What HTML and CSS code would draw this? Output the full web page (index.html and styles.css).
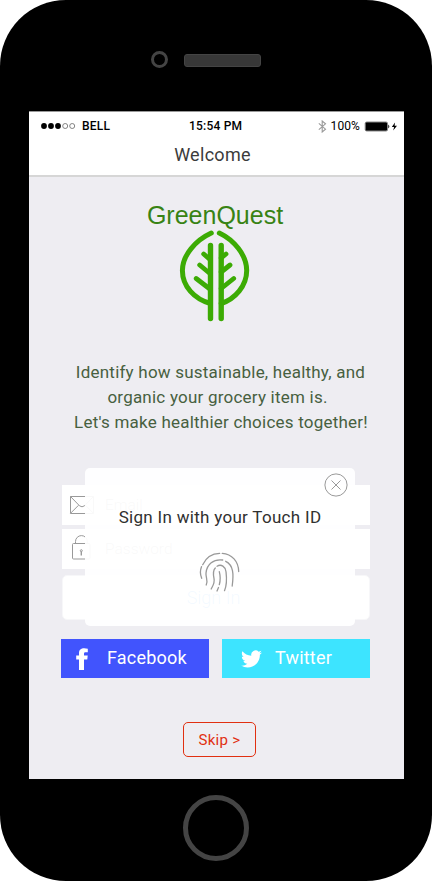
FILE: index.html
```html
<!DOCTYPE html>
<html lang="en">
<head>
<meta charset="utf-8">
<title>GreenQuest</title>
<link rel="stylesheet" href="styles.css">
</head>
<body>
<div class="phone">
  <div class="phone-top">
    <span class="camera"></span>
    <span class="speaker"></span>
  </div>
  <main class="screen">
    <header class="header">
      <div class="status">
        <div class="carrier">
          <svg class="signal" width="35" height="6" viewBox="0 0 35 6"><g fill="#000"><circle cx="3" cy="3" r="2.9"/><circle cx="10" cy="3" r="2.9"/><circle cx="17" cy="3" r="2.9"/></g><g fill="none" stroke="#666" stroke-width=".8"><circle cx="24.2" cy="3" r="2.5"/><circle cx="31.2" cy="3" r="2.5"/></g></svg>
          <span>BELL</span>
        </div>
        <span class="time">15:54 PM</span>
        <div class="power">
          <svg width="9" height="13" viewBox="0 0 9 13" fill="none" stroke="#999" stroke-width="1.1"><path d="M.8 3.3 7.5 9.2 4.2 12V1L7.5 3.8.8 9.7"/></svg>
          <span class="percent">100%</span>
          <svg width="34" height="11" viewBox="0 0 34 11"><rect x="1.200" y="1" width="22.300" height="9" rx="1.5" fill="#000" stroke="#888"/><path d="M24.300 3.500q2 2 0 4z" fill="#000"/><path d="M31 1.5 27.8 6h2.3L29.200 9.400 33 4.8h-2.400z" fill="#000"/></svg>
        </div>
      </div>
      <h1 class="title">Welcome</h1>
    </header>
    <section class="brand">
      <div class="brand-name">GreenQuest</div>
      <svg class="leaf" width="72" height="94" viewBox="0 0 72 94" fill="none" stroke="#3cab04" stroke-width="5" stroke-linecap="round"><path d="M32.300 4C17 11 3.400 26 3.400 41.500 3.400 57 15 70 31.500 74.500M40.300 4C55 11 67.700 26 67.700 41.500 67.700 57 56 70 42.200 74.500"/><path d="M31.500 16.500v73M42.200 16.500v73" stroke-width="5.400"/><path d="M24.700 25 31.500 31M20.700 36 31.500 45M17.200 49.500 31.500 60.500M47 25 42.200 29M51 36 42.200 43M54.700 49.500 42.200 59.500" stroke-width="4.800"/></svg>
    </section>
    <p class="intro"><span class="line one">Identify how sustainable, healthy, and</span><span class="line two">organic your grocery item is.</span><span class="line three">Let's make healthier choices together!</span></p>
    <section class="login">
      <div class="field">
        <svg width="26" height="20" viewBox="0 0 26 20" fill="none" stroke="#999"><path d="M1.500 1.500h23v17h-23zM1.500 1.500l9 9.300q2.500 2 5 0l9-9.300M1.500 18.300l8-8M24.500 18.300l-8-8"/></svg>
        <span>Email</span>
      </div>
      <div class="field password">
        <svg width="22" height="28" viewBox="0 0 22 28" fill="none" stroke="#999"><rect x="1.500" y="8.500" width="17.500" height="15.500" rx="1"/><path d="M4.500 8.500V6.500a5.900 5.900 0 0 1 11.800 0v2"/><path d="M10.300 16.500V20.500" stroke-width="1.400"/><circle cx="10.300" cy="15.700" r="1"/></svg>
        <span>Password</span>
      </div>
      <div class="signin">Sign In</div>
      <div class="touch">
        <svg class="close" width="24" height="24" viewBox="0 0 24 24" fill="none" stroke="#999"><circle cx="12" cy="12" r="11.100"/><path d="m7.500 7.500 9 9m0-9-9 9"/></svg>
        <h2 class="touch-title">Sign In with your Touch ID</h2>
        <svg class="finger" width="42" height="42" viewBox="0 0 42 42" fill="none" stroke="#999" stroke-width="1.300" stroke-linecap="round"><path d="M2.700 27.300Q.2 21.500 2.500 15.700M3.700 13.700C7 6.500 13 2.500 20.700 2.300M23.200 2.300C33 3 39.500 10.500 39.700 20.500"/><path d="M7.200 34c2.300-5-.7-7-.2-12C7.800 13 14.500 7.800 23.700 9M26.700 10.300C34.500 14 34.800 23 33.200 35"/><path d="M12.200 38c1.500-3 3.800-6 2.800-10.500-.8-4-1.600-7.500 1.300-10.500M18 15.200c4.200-2.500 8.500.5 9 5.500.6 5 1.500 12-1.500 19"/><path d="M20.300 20.700q1.800 7 0 13M19.500 36.500 18 40"/></svg>
      </div>
    </section>
    <div class="social">
      <div class="social-button facebook">
        <svg width="13" height="22" viewBox="0 0 13 22" fill="#fff"><path d="M3 22V11.500H.2V7.600H3V5.200C3 1.800 5 .3 8.200.3q2 0 3.600.4v3.600H9.500c-1.200 0-1.500.6-1.500 1.800v1.500h3.700l-.4 3.900H8V22z"/></svg>
        <span>Facebook</span>
      </div>
      <div class="social-button twitter">
        <svg width="21" height="18" viewBox="0 0 24 20" fill="#fff"><path d="M23.950 2.570a10 10 0 0 1-2.820.77 4.960 4.960 0 0 0 2.160-2.720c-.95.55-2 .95-3.120 1.180a4.920 4.920 0 0 0-8.390 4.480C7.690 6.090 4.070 4.130 1.640 1.160a4.820 4.820 0 0 0-.67 2.480c0 1.700.87 3.210 2.190 4.100a4.900 4.900 0 0 1-2.230-.62v.06a4.920 4.920 0 0 0 3.950 4.830 5 5 0 0 1-2.210.08 4.940 4.940 0 0 0 4.600 3.420A9.870 9.870 0 0 1 0 17.540a14 14 0 0 0 7.560 2.210c9.050 0 14-7.500 14-13.980l-.02-.64a9.940 9.940 0 0 0 2.410-2.560z"/></svg>
        <span>Twitter</span>
      </div>
    </div>
    <div class="skip">Skip &gt;</div>
  </main>
  <div class="phone-bottom"><span class="home"></span></div>
</div>
</body>
</html>
```
FILE: styles.css
```css
* { box-sizing: border-box; }
body { margin: 0; background: #fff; font-family: Roboto, "Liberation Sans", sans-serif; }
svg { display: block; flex: none; }
.phone { width: 432px; height: 881px; background: #000; border-radius: 66px; padding: 0 28px 0 29px; overflow: hidden; }
.phone-top { height: 111px; padding: 51px 0 0 122px; display: flex; align-items: flex-start; gap: 16px; }
.camera { width: 17px; height: 17px; border: 3px solid #444; border-radius: 50%; }
.speaker { width: 77px; height: 13px; margin-top: 3px; border-radius: 3px; background: #373737; border: 1px solid #444; }
.screen { height: 668px; background: #eeedf2; display: flex; flex-direction: column; }
.header { height: 66px; background: #fff; border-top: 1px solid #999; border-bottom: 2px solid #d6d6d6; }
.status { height: 28px; display: grid; grid-template-columns: 148px 72px 1fr; align-items: center; padding: 0 6px 0 12px; font-size: 12px; font-weight: 500; letter-spacing: .2px; color: #000; }
.carrier { display: flex; align-items: center; gap: 6px; }
.time { white-space: nowrap; }
.power { display: flex; align-items: center; justify-content: flex-end; gap: 4px; }
.percent { font-weight: 400; letter-spacing: .1px; }
.title { margin: 3px 0 0; padding-right: 8px; font-size: 18px; font-weight: 400; line-height: 24px; letter-spacing: .3px; text-align: center; color: #3b3b3b; }
.brand { height: 183px; padding-top: 25px; display: flex; flex-direction: column; align-items: center; }
.brand-name { font-family: "Liberation Sans", Arial, sans-serif; font-size: 25px; line-height: 27px; color: #388314; margin-right: 3px; }
.leaf { margin-right: 4px; }
.intro { margin: 0; height: 108px; font-size: 17px; line-height: 25px; letter-spacing: .22px; color: #47603f; display: flex; flex-direction: column; }
.line { text-align: center; white-space: nowrap; }
.one { padding-left: 8px; }
.two { padding-left: 2px; }
.three { padding-left: 9px; }
.login { position: relative; height: 171px; padding: 17px 34px 0 33px; }
.field { height: 40px; margin-bottom: 4px; padding-left: 7px; background: #fff; display: flex; align-items: center; gap: 10px; font-size: 15.5px; font-weight: 300; color: #999; }
.password { padding-left: 9px; gap: 12px; margin-bottom: 6px; }
.signin { height: 45px; border: 1px solid #f7f7f9; border-radius: 5px; background: #fff; font-size: 18px; font-weight: 300; line-height: 43px; padding-right: 5px; color: #3b9cff; text-align: center; }
.touch { position: absolute; left: 56px; top: 0; width: 270px; height: 158px; border-radius: 5px; background: rgba(255, 255, 255, .94); }
.close { margin: 5px 0 0 239px; }
.touch-title { margin: 7px 0 0; font-size: 17px; font-weight: 400; line-height: 26px; letter-spacing: .3px; text-align: center; color: #303030; }
.finger { margin: 21px 0 0 114px; }
.social { height: 39px; padding: 0 34px 0 32px; display: flex; gap: 13px; }
.social-button { width: 148px; height: 39px; display: flex; align-items: center; color: #fff; font-size: 18px; letter-spacing: .2px; }
.social-button span { margin-top: -2px; }
.facebook { background: #4154fd; padding-left: 15px; gap: 18px; }
.twitter { background: #3de4ff; padding-left: 19px; gap: 13px; }
.skip { width: 73px; height: 35px; margin: 44px 0 0 154px; border: 1px solid #e13011; border-radius: 5px; color: #e13011; font-size: 15px; line-height: 34px; letter-spacing: .3px; text-align: center; }
.phone-bottom { display: flex; justify-content: center; padding: 16px 1px 0 0; }
.home { width: 66px; height: 66px; border: 5px solid #444; border-radius: 50%; }
```
